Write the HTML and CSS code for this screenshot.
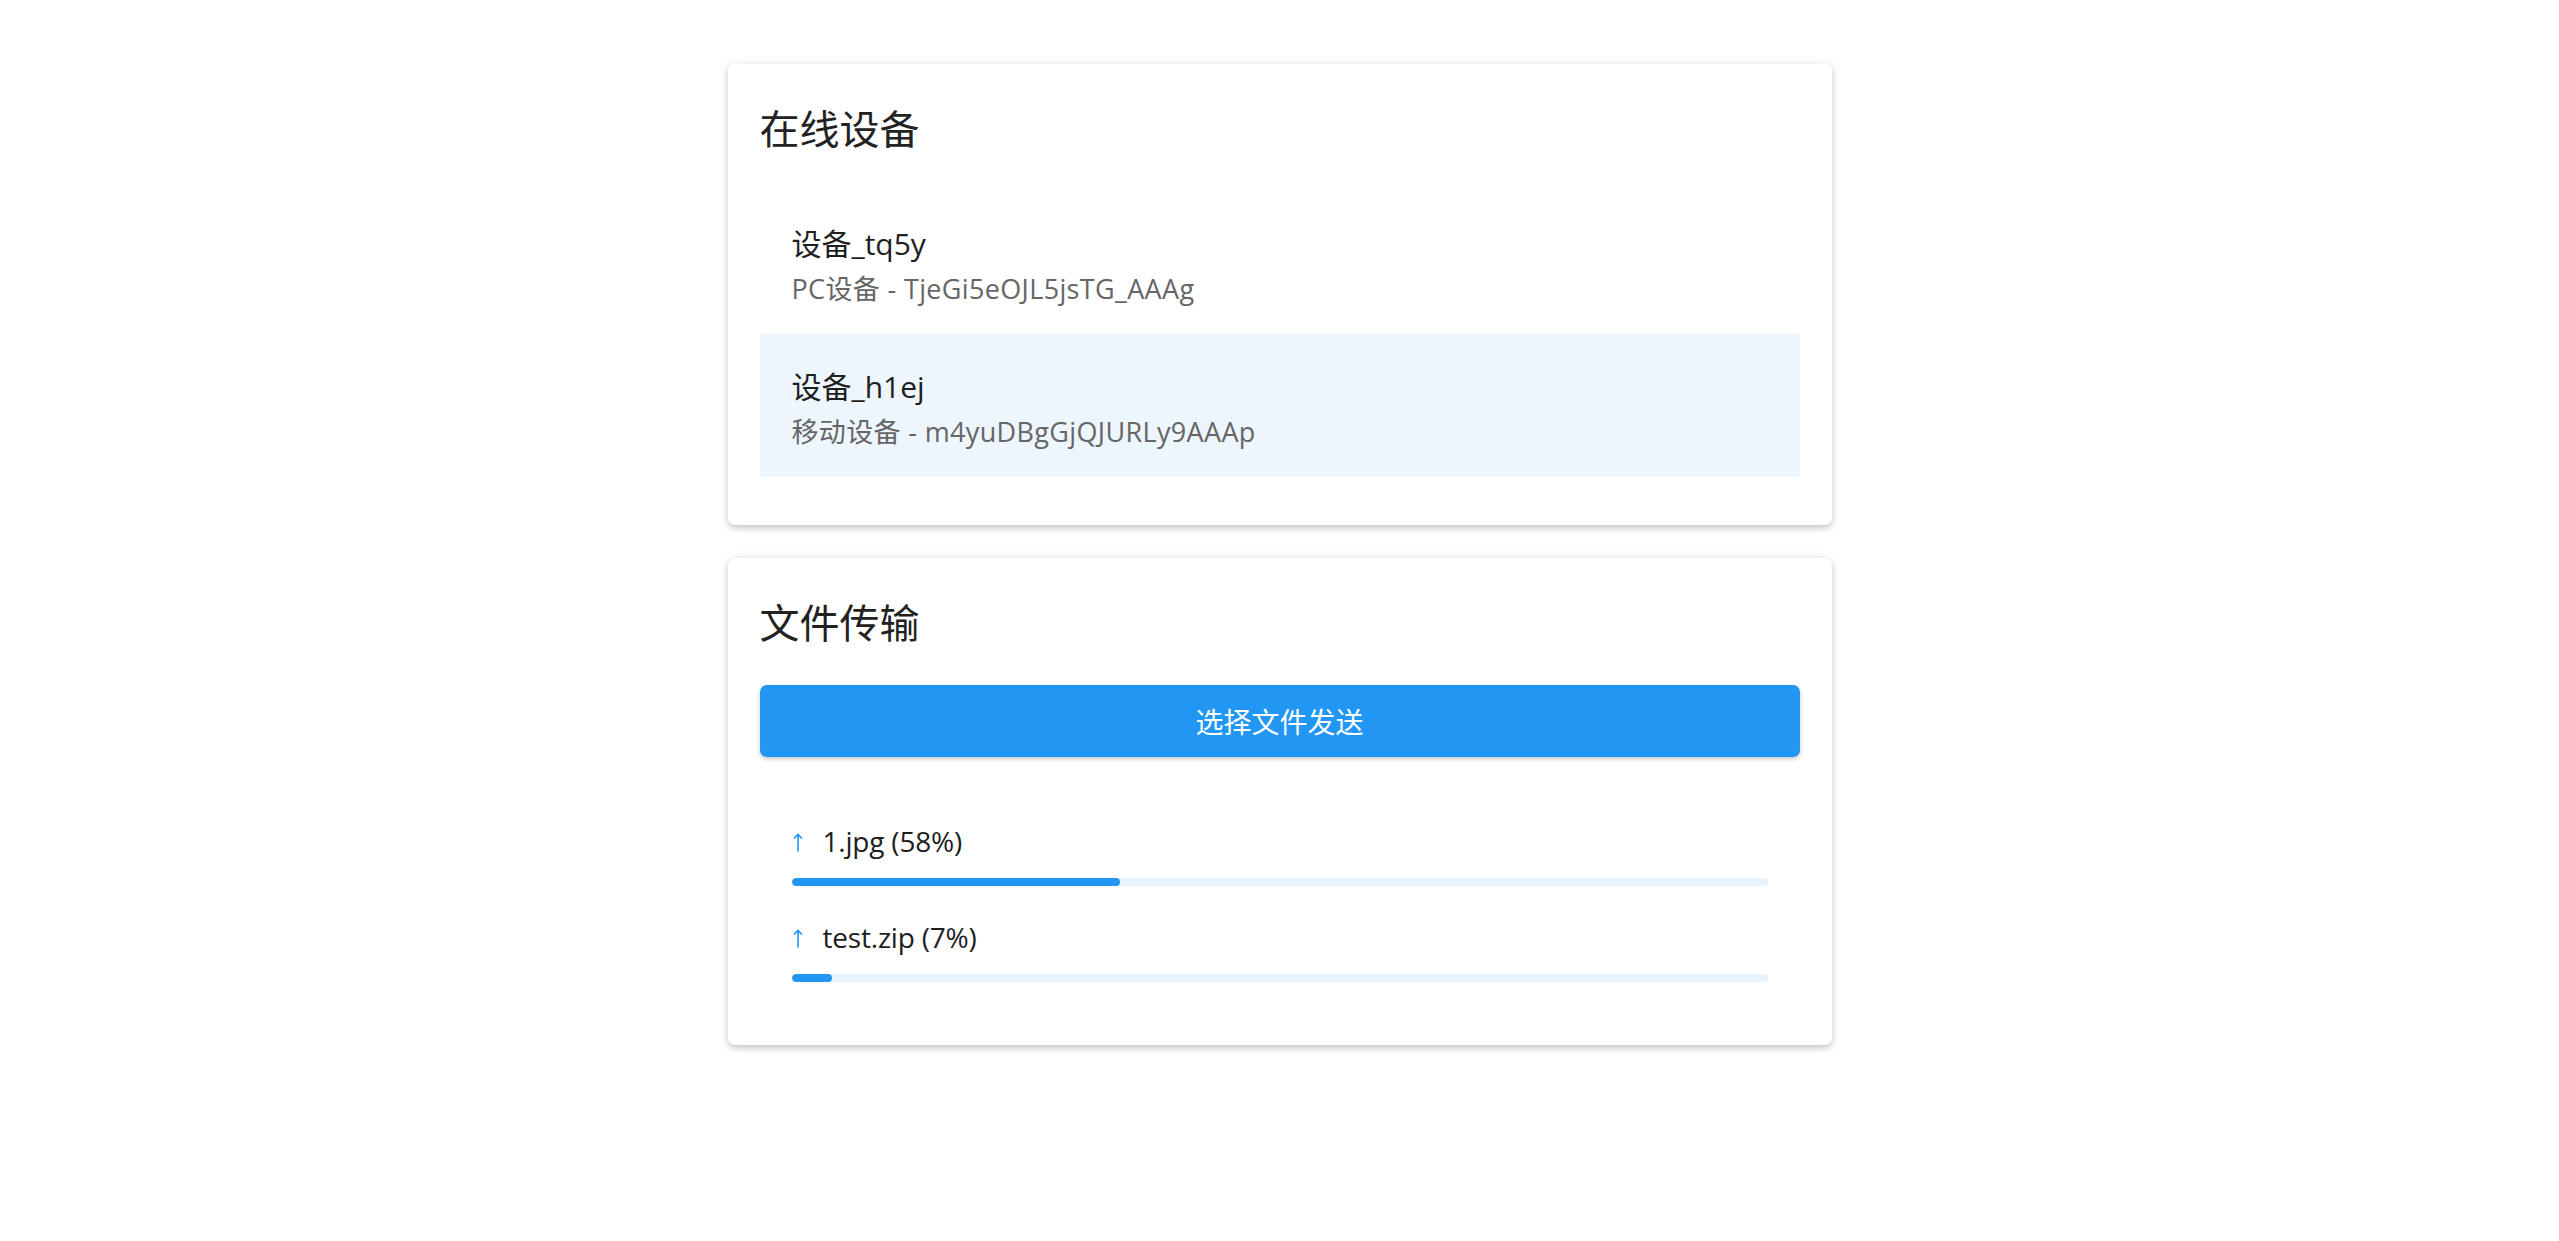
FILE: index.html
```html
<!DOCTYPE html>
<html lang="zh-CN">
<head>
<meta charset="utf-8">
<title>文件传输</title>
<link rel="stylesheet" href="styles.css">
</head>
<body>
<main class="container">
  <section class="card">
    <h2 class="card-title">在线设备</h2>
    <ul class="device-list">
      <li class="device-item">
        <div class="device-name">设备_tq5y</div>
        <div class="device-meta">PC设备 - TjeGi5eOJL5jsTG_AAAg</div>
      </li>
      <li class="device-item selected">
        <div class="device-name">设备_h1ej</div>
        <div class="device-meta">移动设备 - m4yuDBgGjQJURLy9AAAp</div>
      </li>
    </ul>
  </section>

  <section class="card">
    <h2 class="card-title">文件传输</h2>
    <button class="send-btn" type="button">选择文件发送</button>
    <ul class="transfer-list">
      <li class="transfer-item">
        <div class="transfer-label">
          <svg class="arrow" width="10" height="19" viewBox="0 0 10 19"><path d="M5 18.5V1.5M1 5.5L5 1.5L9 5.5" fill="none" stroke="#2196f3" stroke-width="1.6"/></svg>
          <span>1.jpg (58%)</span>
        </div>
        <div class="bar"><div class="bar-fill" style="width:33.7%"></div></div>
      </li>
      <li class="transfer-item">
        <div class="transfer-label">
          <svg class="arrow" width="10" height="19" viewBox="0 0 10 19"><path d="M5 18.5V1.5M1 5.5L5 1.5L9 5.5" fill="none" stroke="#2196f3" stroke-width="1.6"/></svg>
          <span>test.zip (7%)</span>
        </div>
        <div class="bar"><div class="bar-fill" style="width:4.2%"></div></div>
      </li>
    </ul>
  </section>
</main>
</body>
</html>
```

FILE: styles.css
```css
* { box-sizing: border-box; }

body {
  margin: 0;
  background: #ffffff;
  font-family: "Open Sans", "Noto Sans CJK SC", sans-serif;
  color: #222222;
}

.container {
  width: 1104px;
  margin: 64px auto;
  display: flex;
  flex-direction: column;
  gap: 33px;
}

.card {
  background: #ffffff;
  border-radius: 7px;
  padding: 32px;
  box-shadow: 0 3px 6px rgba(0, 0, 0, 0.2), 0 0 14px rgba(0, 0, 0, 0.06);
}

.card-title {
  margin: 5px 0 34px;
  font-size: 40px;
  font-weight: 400;
  line-height: 56px;
  color: #222222;
}

.device-list,
.transfer-list {
  list-style: none;
  margin: 0 0 16px;
  padding: 0;
}

.device-item {
  padding: 30px 32px 25px;
}

.device-item.selected {
  background: #edf5fd;
}

.device-name {
  font-size: 30px;
  line-height: 45px;
  color: #1e1e1e;
}

.device-meta {
  margin-top: 3px;
  font-size: 27px;
  line-height: 40px;
  letter-spacing: 0.35px;
  color: #666666;
}

.send-btn {
  display: flex;
  align-items: center;
  justify-content: center;
  width: 100%;
  height: 72px;
  border: 0;
  border-radius: 7px;
  background: #2196f3;
  color: #ffffff;
  font-family: inherit;
  font-size: 28px;
  box-shadow: 0 2px 4px rgba(0, 0, 0, 0.22);
}

.transfer-list {
  margin-top: 48px;
}

.transfer-item {
  padding: 15px 32px;
}

.transfer-label {
  display: flex;
  align-items: center;
  gap: 20px;
  font-size: 28px;
  line-height: 42px;
  letter-spacing: -0.2px;
  color: #1e1e1e;
}

.arrow {
  flex: none;
  margin-left: 1px;
  margin-top: 2px;
}

.bar {
  margin-top: 16px;
  height: 8px;
  border-radius: 4px;
  background: #e8f3fd;
  overflow: hidden;
}

.bar-fill {
  height: 100%;
  border-radius: 4px;
  background: #2196f3;
}
```
